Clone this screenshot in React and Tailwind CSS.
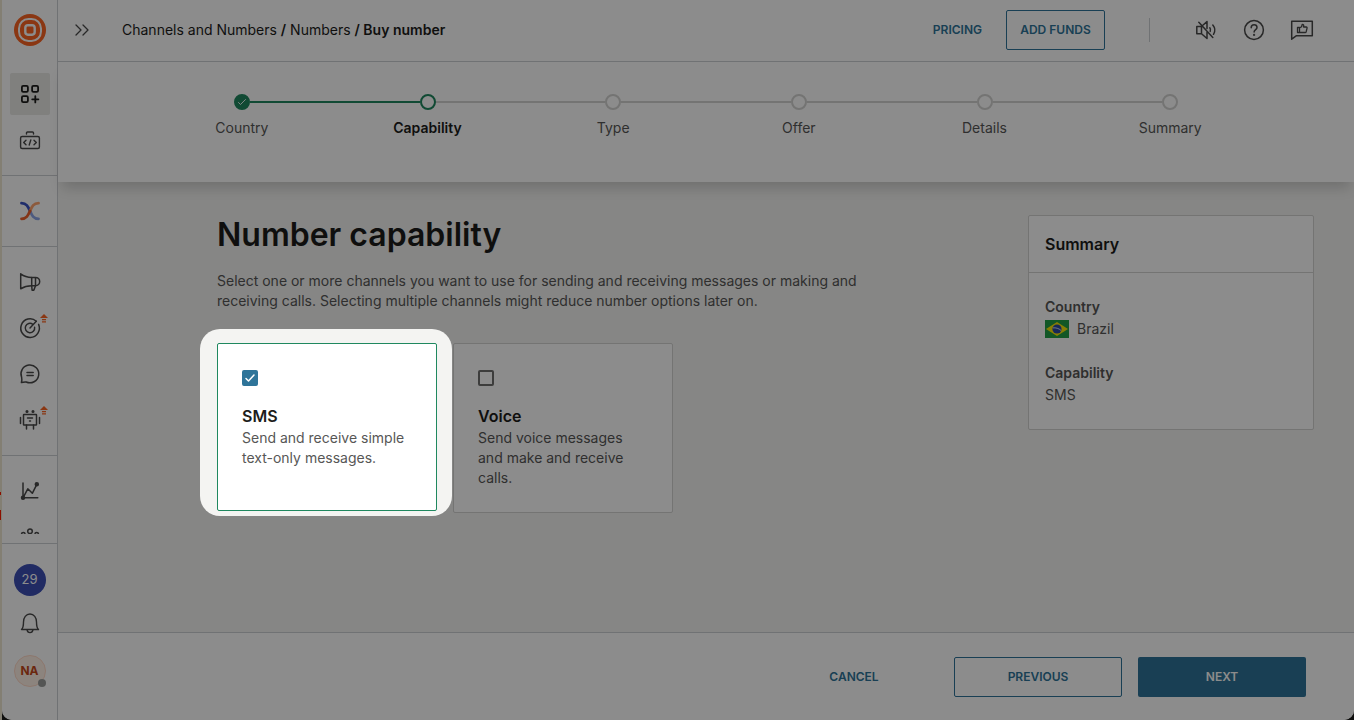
import { useState } from 'react';
import { ChevronsRight } from 'lucide-react';

const steps = ['Country', 'Capability', 'Type', 'Offer', 'Details', 'Summary'];
const currentStep = 1;

const capabilities = [
  { id: 'sms', title: 'SMS', description: 'Send and receive simple text-only messages.' },
  { id: 'voice', title: 'Voice', description: 'Send voice messages and make and receive calls.' },
];

// Shared button styles
const outlineButtonClasses = 'h-10 rounded-xs border border-[#2e7499] text-xs font-semibold text-[#2e7499]';
const textButtonClasses = 'h-10 text-xs font-semibold text-[#2e7499]';
const primaryButtonClasses = 'h-10 rounded-xs bg-[#2e7499] text-xs font-semibold text-white';

// --- Icons ---

function Icon({ children, className = 'size-6', width = 1.5 }) {
  return (
    <svg
      viewBox="0 0 24 24"
      className={className}
      fill="none"
      stroke="currentColor"
      strokeWidth={width}
      strokeLinecap="round"
      strokeLinejoin="round"
      aria-hidden="true"
    >
      {children}
    </svg>
  );
}

function LogoIcon() {
  return (
    <svg viewBox="0 0 32 32" className="size-8" fill="none" aria-hidden="true">
      <circle cx="16" cy="16" r="16" fill="#fc6423" />
      <rect x="5" y="5" width="22" height="22" rx="9.5" stroke="#fff" strokeWidth="2" />
      <rect x="11.3" y="11.3" width="9.4" height="9.4" rx="2.6" stroke="#fff" strokeWidth="2.4" />
    </svg>
  );
}

function AppsIcon() {
  return (
    <Icon width={1.8}>
      <rect x="3.9" y="3.9" width="6" height="6" rx="1.3" />
      <rect x="14.1" y="3.9" width="6" height="6" rx="1.3" />
      <rect x="3.9" y="14.1" width="6" height="6" rx="1.3" />
      <path d="M17.3 14.2v6.2M14.2 17.3h6.2" />
    </Icon>
  );
}

function DevToolsIcon() {
  return (
    <Icon width={1.4}>
      <rect x="2.6" y="8.5" width="18.8" height="12" rx="1.5" />
      <path d="M8.500 6V5a1 1 0 0 1 1-1h5a1 1 0 0 1 1 1v1" />
      <path d="M8 12.200 5.700 14.500 8 16.800M16 12.200l2.300 2.300-2.300 2.300M12.800 12l-1.600 5" />
    </Icon>
  );
}

function ExchangeIcon() {
  return (
    <svg viewBox="0 0 24 24" className="size-6" fill="none" strokeWidth="2.8" strokeLinecap="round" aria-hidden="true">
      <path d="M12 12c2 4.500 3.500 7.800 8.500 7.800" stroke="#8da5e8" />
      <path d="M3.500 4.200c5 0 6.500 3.300 8.500 7.800" stroke="#3a53c4" />
      <path d="M20.500 4.200c-5 0-6.500 3.300-8.500 7.800" stroke="#ffa46e" />
      <path d="M12 12c-2 4.500-3.500 7.800-8.500 7.800" stroke="#f0622a" />
    </svg>
  );
}

function CampaignIcon() {
  return (
    <Icon>
      <path d="M2.700 3.800v15c3.500-2.200 7-3 11-3h3.800a4.200 4.200 0 0 0 0-8.400h-3.800c-4 0-7.500-1-11-3.600Z" />
      <path d="M13.700 7.400v8.400M13.700 15.800l.4 4.400h1.700l1.700-4.400V8" />
    </Icon>
  );
}

function TargetIcon() {
  return (
    <Icon>
      <path d="M18.300 5.200a9.300 9.300 0 1 0 2.300 3.200" />
      <path d="M14.800 8.300a4.700 4.700 0 1 0 1.800 3" />
      <path d="m12 12 6.300-6.800" />
    </Icon>
  );
}

function ChatIcon() {
  return (
    <Icon>
      <path d="M3.600 15.200A8.900 8.900 0 1 1 8.200 20c-1.500-.2-3 0-4.800.5.500-1.800.6-3.500.2-5.300Z" />
      <path d="M9 10.500h6.200M9 13.500h6.200" />
    </Icon>
  );
}

function BotIcon() {
  return (
    <Icon>
      <rect x="5.500" y="6.500" width="13" height="10.500" rx=".5" />
      <path d="M2.500 9.500v6M21.500 9.500v6M8.500 17v4M15.500 17v4M9.500 10h5M11.500 13h1" />
      <circle cx="9" cy="3.500" r=".8" fill="currentColor" />
      <circle cx="15" cy="3.500" r=".8" fill="currentColor" />
    </Icon>
  );
}

function ChartIcon() {
  return (
    <Icon>
      <path d="M5 4v14.800h14.800M5 18.800l4.800-9 4.500 4.500 4.500-9" />
      <circle cx="5" cy="18.800" r="1.500" fill="currentColor" />
      <circle cx="18.800" cy="5.200" r="1.500" fill="currentColor" />
    </Icon>
  );
}

function PeopleIcon() {
  return (
    <Icon>
      <circle cx="12" cy="6.200" r="2.300" />
      <circle cx="5.300" cy="9.300" r="1.800" />
      <circle cx="18.700" cy="9.300" r="1.800" />
      <path d="M7 19c0-3 2-6 5-6s5 3 5 6" />
    </Icon>
  );
}

function BellIcon() {
  return (
    <Icon width={1.4}>
      <path d="M3.500 18.500c1.800-1.600 2-3 2-7.500 0-4.500 2.500-8 6.500-8s6.500 3.500 6.500 8c0 4.500.2 5.900 2 7.500Z" />
      <path d="M9 18.600c.3 2 1.500 3 3 3s2.700-1 3-3" />
    </Icon>
  );
}

function MutedIcon() {
  return (
    <Icon>
      <path d="M7.500 8.500H2.800v7.200h4.700M7.500 8.500v7.200l5.500 4.800v-6.300M8.800 7.300 13 3.600v6.800M4.800 4.200 18.800 19.500" />
      <path d="M15.800 9.800c.8 1 .9 2.400.4 3.600M18.800 7c2.300 2.800 2.500 6.400.7 9.300" />
    </Icon>
  );
}

function HelpIcon() {
  return (
    <Icon>
      <circle cx="12" cy="12" r="9.400" />
      <path d="M9.200 9.700c0-1.700 1.200-2.900 2.900-2.900s2.900 1.100 2.900 2.600c0 2.200-2.900 2.200-2.900 4.600" />
      <circle cx="12.100" cy="16.900" r=".4" fill="currentColor" />
    </Icon>
  );
}

function FeedbackIcon() {
  return (
    <Icon>
      <path d="M1.700 3.300h20.600v14.400H6.500l-4.800 3.500Z" />
      <path
        strokeWidth="1.3"
        d="M7.500 9.500h2v5h-2ZM9.500 10l2-1.300.8-2.400c1.400 0 1.700 1 1.200 2.700h2.700c.8 0 1 .6.800 1.300l-.8 3.400c-.2.600-.5.800-1 .8H9.500"
      />
    </Icon>
  );
}

function UpgradeBadge() {
  return (
    <svg viewBox="0 0 8 9" className="absolute top-[7px] right-0.5 h-[9px] w-2" fill="#fc6423" aria-hidden="true">
      <path d="M4 0 8 4H0ZM2 5h4v1.200H2ZM2 7.300h4v1.200H2Z" />
    </svg>
  );
}

function BrazilFlag() {
  return (
    <svg viewBox="0 0 24 18" className="h-[18px] w-6" aria-hidden="true">
      <rect width="24" height="18" fill="#229e45" />
      <path d="M12 2 23 9l-11 7L1 9Z" fill="#f8e509" />
      <circle cx="12" cy="9" r="4.600" fill="#2b49a3" />
      <path d="M7.800 7.900c3-.4 6 .5 8.300 2.600" stroke="#fff" strokeWidth=".8" fill="none" />
    </svg>
  );
}

// --- Sidebar ---

const navGroups = [
  [
    { label: 'Apps', icon: AppsIcon, active: true },
    { label: 'Developer tools', icon: DevToolsIcon },
  ],
  [{ label: 'Exchange', icon: ExchangeIcon }],
  [
    { label: 'Campaigns', icon: CampaignIcon },
    { label: 'Moments', icon: TargetIcon, upgrade: true },
    { label: 'Conversations', icon: ChatIcon },
    { label: 'Answers', icon: BotIcon, upgrade: true },
  ],
  [
    { label: 'Analyze', icon: ChartIcon },
    { label: 'People', icon: PeopleIcon },
  ],
];

function Sidebar() {
  return (
    <aside className="flex w-14 shrink-0 flex-col rounded-bl-[10px] border-r border-[#cdcfd3] bg-white text-[#4a4a4a]">
      <a href="#home" aria-label="Home" className="flex h-[59px] shrink-0 items-end justify-center pb-[13px]">
        <LogoIcon />
      </a>
      <nav className="min-h-0 flex-1 overflow-hidden">
        {navGroups.map((group, index) => (
          <div
            key={index}
            className="flex flex-col items-center gap-1 border-b border-[#cdcfd3] py-3.5 last:border-b-0"
          >
            {group.map(({ label, icon: NavIcon, active, upgrade }) => (
              <a
                key={label}
                href={`#${label}`}
                aria-label={label}
                className={`relative flex h-[42px] w-10 items-center justify-center rounded-xs ${active ? 'bg-[#e9e9e6] text-[#1d1d1b]' : ''}`}
              >
                <NavIcon />
                {upgrade && <UpgradeBadge />}
              </a>
            ))}
          </div>
        ))}
      </nav>
      <div className="mt-[9px] flex shrink-0 flex-col items-center border-t border-[#cdcfd3] pt-5 pb-[33px]">
        <button type="button" className="size-8 rounded-full bg-[#3c4fb5] text-[13px] text-white">29</button>
        <button type="button" aria-label="Notifications" className="mt-[15px] size-6">
          <BellIcon />
        </button>
        <button
          type="button"
          className="relative mt-5 size-8 rounded-full border border-[#ffd9c7] bg-[#fff1e6] text-xs font-bold text-[#c4481a]"
        >
          NA
          <span className="absolute -right-px -bottom-px size-2 rounded-full bg-[#9a9c9a]" />
        </button>
      </div>
    </aside>
  );
}

// --- Top bar ---

function TopBar() {
  return (
    <header className="flex h-[62px] shrink-0 items-center border-b border-[#cdcfd3] bg-white pr-10 pb-0.5 pl-3">
      <button type="button" aria-label="Expand menu" className="text-[#4a4a4a]">
        <ChevronsRight className="size-6" strokeWidth={1.3} />
      </button>
      <nav aria-label="Breadcrumb" className="ml-7 text-sm text-[#1d1d1b]">
        <a href="#channels">Channels and Numbers</a> <span className="font-semibold">/</span>{' '}
        <a href="#numbers">Numbers</a> <span className="font-semibold">/ Buy number</span>
      </nav>
      <div className="ml-auto flex items-center">
        <a href="#pricing" className="text-xs font-semibold text-[#2e7499]">PRICING</a>
        <button type="button" className={`ml-6 w-[99px] ${outlineButtonClasses}`}>ADD FUNDS</button>
        <span className="mx-11 h-6 w-px bg-[#cdcfd3]" />
        <div className="flex gap-6 text-[#4a4a4a]">
          <button type="button" aria-label="Unmute"><MutedIcon /></button>
          <button type="button" aria-label="Help"><HelpIcon /></button>
          <button type="button" aria-label="Feedback"><FeedbackIcon /></button>
        </div>
      </div>
    </header>
  );
}

// --- Stepper ---

function Stepper() {
  return (
    <div className="relative shrink-0 bg-white px-[91px] pt-8 pb-11 shadow-[0_10px_12px_-4px_rgba(0,0,0,0.16)]">
      <ol className="grid grid-cols-6 text-center text-sm">
        {steps.map((step, index) => (
          <li key={step}>
            <div className="flex items-center">
              <span className={`h-0.5 flex-1 ${index === 0 ? '' : index <= currentStep ? 'bg-[#1f885f]' : 'bg-[#d3d3d1]'}`} />
              <span
                className={`flex size-4 items-center justify-center rounded-full border-2 ${index <= currentStep ? 'border-[#1f885f]' : 'border-[#d3d3d1]'} ${index < currentStep ? 'bg-[#1f885f] text-white' : ''}`}
              >
                {index < currentStep && (
                  <Icon className="size-3" width={1.8}><path d="m5 13 4 4L19 7" /></Icon>
                )}
              </span>
              <span className={`h-0.5 flex-1 ${index === steps.length - 1 ? '' : index < currentStep ? 'bg-[#1f885f]' : 'bg-[#d3d3d1]'}`} />
            </div>
            <p className={`mt-2 ${index === currentStep ? 'font-semibold text-[#1d1d1b]' : 'text-[#575756]'}`}>{step}</p>
          </li>
        ))}
      </ol>
    </div>
  );
}

// --- Capability cards ---

function CapabilityCard({ capability, checked, onToggle, spotlight }) {
  return (
    <div className="relative w-[220px]">
      <label
        className={`block min-h-[168px] cursor-pointer rounded-xs border bg-white p-6 ${checked ? 'border-[#1f885f]' : 'border-[#d3d3d1]'}`}
      >
        <span className="relative flex h-5 items-center">
          <input
            type="checkbox"
            checked={checked}
            onChange={onToggle}
            className="size-4 appearance-none rounded-xs border-2 border-[#6f6f6e] checked:border-[#2e7499] checked:bg-[#2e7499]"
          />
          {checked && (
            <Icon className="pointer-events-none absolute left-0.5 size-3 text-white" width={3}>
              <path d="m4 13 5 5L20 6" />
            </Icon>
          )}
        </span>
        <span className="mt-4 block text-base font-semibold text-[#1d1d1b]">{capability.title}</span>
        <span className="block text-sm text-[#575756]">{capability.description}</span>
      </label>
      {/* The spread shadow dims everything outside the highlighted card */}
      {spotlight && (
        <div className="pointer-events-none absolute -top-3.5 -right-[15px] -bottom-[5px] -left-[17px] z-20 rounded-[20px] shadow-[0_0_0_2000px_rgba(0,0,0,0.45)]" />
      )}
    </div>
  );
}

function SummaryPanel({ selected }) {
  return (
    <section className="w-[286px] shrink-0 self-start rounded-xs border border-[#d3d3d1] bg-white text-sm text-[#575756]">
      <h2 className="border-b border-[#d3d3d1] p-4 text-base font-semibold text-[#1d1d1b]">Summary</h2>
      <dl className="px-4 py-6">
        <dt className="font-semibold">Country</dt>
        <dd className="mt-0.5 flex items-center gap-2">
          <BrazilFlag />
          Brazil
        </dd>
        <dt className="mt-6 font-semibold">Capability</dt>
        <dd className="mt-0.5">{selected.map((item) => item.title).join(', ')}</dd>
      </dl>
    </section>
  );
}

// Sliver of the window that lies behind the page, on its left edge
function WindowEdge() {
  return (
    <div className="flex w-0.5 shrink-0 flex-col justify-end bg-[#efe7d2] pb-3.5" aria-hidden="true">
      <span className="h-[3px] w-px bg-[#ff1a00]" />
      <span className="mt-[15px] mb-[186px] h-2.5 w-px bg-[#ff1a00]" />
    </div>
  );
}

function App() {
  const [selectedIds, setSelectedIds] = useState(['sms']);

  const toggleCapability = (id) => {
    setSelectedIds((current) => (current.includes(id) ? current.filter((item) => item !== id) : [...current, id]));
  };

  return (
    <div className="flex h-screen overflow-hidden bg-[#1d1d1b] font-['Inter',sans-serif]">
      <WindowEdge />
      <div className="flex min-w-0 flex-1 rounded-b-[10px] bg-[#f4f4f2]">
        <Sidebar />
        <div className="flex min-w-0 flex-1 flex-col">
          <TopBar />
          <Stepper />
          <main className="flex flex-1 justify-between gap-8 pt-[33px] pr-10 pl-[159px]">
            <div className="max-w-[672px]">
              <h1 className="text-[32px] leading-10 font-semibold text-[#1d1d1b]">Number capability</h1>
              <p className="mt-4 text-sm text-[#575756]">
                Select one or more channels you want to use for sending and receiving messages or making and receiving
                calls. Selecting multiple channels might reduce number options later on.
              </p>
              <div className="mt-8 flex items-start gap-4">
                {capabilities.map((capability) => (
                  <CapabilityCard
                    key={capability.id}
                    capability={capability}
                    checked={selectedIds.includes(capability.id)}
                    onToggle={() => toggleCapability(capability.id)}
                    spotlight={capability.id === 'sms'}
                  />
                ))}
              </div>
            </div>
            <SummaryPanel selected={capabilities.filter(({ id }) => selectedIds.includes(id))} />
          </main>
          <footer className="flex shrink-0 justify-end gap-4 rounded-br-[10px] border-t border-[#cdcfd3] bg-white pt-6 pr-12 pb-[23px]">
            <button type="button" className={`w-[168px] ${textButtonClasses}`}>CANCEL</button>
            <button type="button" className={`w-[168px] ${outlineButtonClasses}`}>PREVIOUS</button>
            <button type="button" className={`w-[168px] ${primaryButtonClasses}`}>NEXT</button>
          </footer>
        </div>
      </div>
    </div>
  );
}

export default App;
